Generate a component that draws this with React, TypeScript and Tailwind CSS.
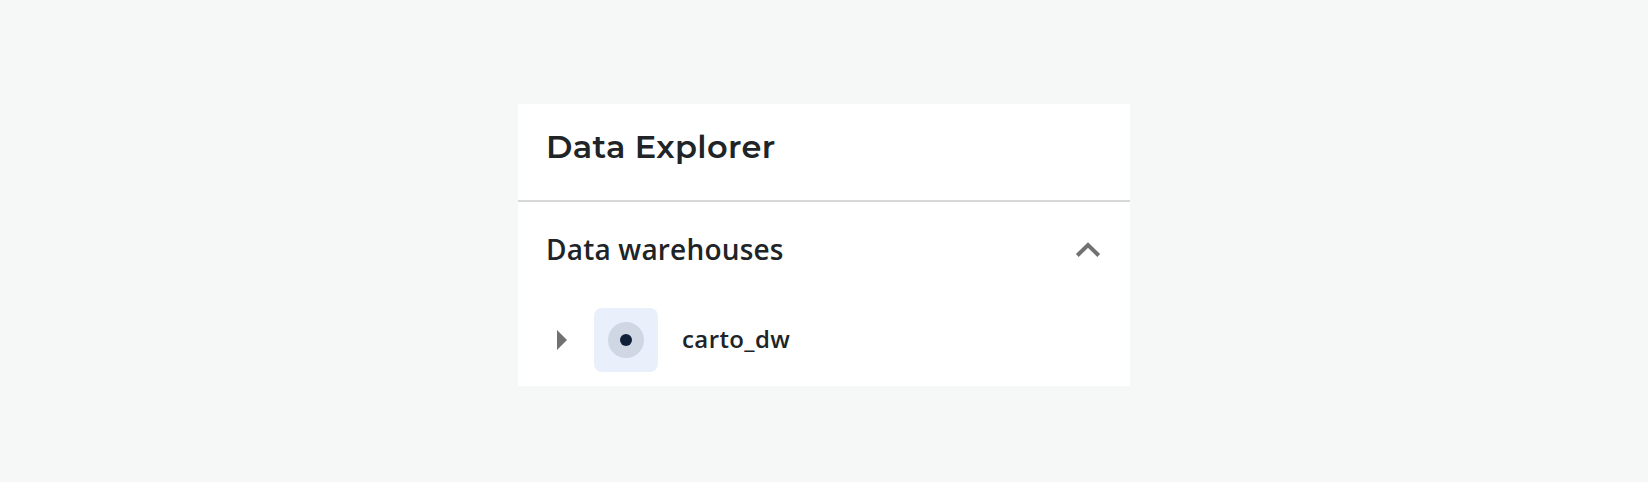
export default function App() {
  return (
    <div className="flex h-[482px] w-[1648px] justify-center bg-[#f6f8f8] pt-[104px] font-['Open_Sans',sans-serif] text-[#202426] antialiased">
      <section className="h-[282px] w-[612px] bg-white">
        <header className="flex h-[98px] items-start border-b-2 border-[#d8d8d9] px-[28px] pt-[22px]">
          <h1 className="whitespace-nowrap font-['Montserrat','Open_Sans',sans-serif] text-[32px] font-semibold leading-[42px] tracking-[0.36px]">
            Data Explorer
          </h1>
        </header>
        <button className="flex h-[96px] w-full items-center justify-between px-[28px]">
          <span className="whitespace-nowrap pb-[2px] text-[28px] font-semibold leading-[40px] tracking-[0.2px]">Data warehouses</span>
          <svg className="h-[16px] w-[28px]" viewBox="0 0 28 16" fill="none">
            <path d="M3.3 13.5 14 3l10.7 10.5" stroke="#707173" strokeWidth="4" />
          </svg>
        </button>
        <div className="flex h-[84px] items-center pl-[39px]">
          <svg className="h-[20px] w-[10px]" viewBox="0 0 10 20">
            <path d="M0 0 10 10 0 20Z" fill="#707173" />
          </svg>
          <div className="ml-[27px] flex size-[64px] items-center justify-center rounded-lg bg-[#e9f0fc]">
            <div className="flex size-[36px] items-center justify-center rounded-full bg-[#d0d7e4]">
              <div className="size-[12px] rounded-full bg-[#102039]" />
            </div>
          </div>
          <span className="ml-[24px] whitespace-nowrap pb-[2px] text-[24px] font-semibold leading-[36px] tracking-[0.4px]">carto_dw</span>
        </div>
      </section>
    </div>
  );
}
